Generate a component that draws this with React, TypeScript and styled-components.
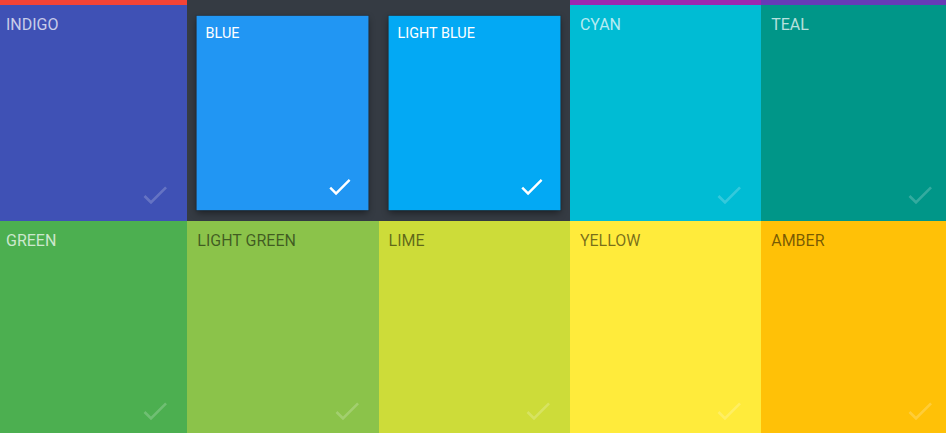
import React from "react";
import styled, { createGlobalStyle } from "styled-components";

const GlobalStyle = createGlobalStyle`
  html, body {
    margin: 0;
    padding: 0;
    width: 946px;
    height: 433px;
    overflow: hidden;
    background: #353b43;
    font-family: Roboto, "Liberation Sans", Arial, sans-serif;
  }
`;

const Viewport = styled.div`
  width: 946px;
  height: 433px;
  overflow: hidden;
`;

const Grid = styled.div`
  display: grid;
  grid-template-columns: repeat(5, 191.3px);
  grid-template-rows: 5px;
  grid-auto-rows: 216px;
  margin-left: -4px;
  width: max-content;
`;

const PeekCell = styled.div<{ $bg: string }>`
  background: ${(p) => p.$bg};
`;

const Cell = styled.div<{ $bg: string; $selected: boolean }>`
  background: ${(p) => (p.$selected ? "#353b43" : p.$bg)};
  display: flex;
`;

const Swatch = styled.div<{ $bg: string; $selected: boolean }>`
  flex: 1;
  display: flex;
  flex-direction: column;
  background: ${(p) => p.$bg};
  transform: ${(p) => (p.$selected ? "scale(0.9)" : "none")};
  box-shadow: ${(p) =>
    p.$selected
      ? "0 0 0 1px rgba(0,0,0,0.12), 0 3px 8px rgba(0,0,0,0.45)"
      : "none"};
`;

const Label = styled.div<{ $light: boolean; $selected: boolean }>`
  padding: 11px 10px 0;
  font-size: 16px;
  line-height: 18px;
  text-transform: uppercase;
  color: ${(p) =>
    p.$selected
      ? "#ffffff"
      : p.$light
      ? "rgba(0,0,0,0.54)"
      : "rgba(255,255,255,0.72)"};
`;

const Check = styled.svg<{ $selected: boolean }>`
  width: 32px;
  height: 32px;
  margin: auto 16px 10px auto;
  fill: ${(p) => (p.$selected ? "#ffffff" : "rgba(255,255,255,0.2)")};
`;

type Color = { name: string; hex: string; light?: boolean; selected?: boolean };

const peekRow = ["#f44336", "#353b43", "#353b43", "#9c27b0", "#673ab7"];

const colors: Color[] = [
  { name: "Indigo", hex: "#3f51b5" },
  { name: "Blue", hex: "#2196f3", selected: true },
  { name: "Light Blue", hex: "#03a9f4", selected: true },
  { name: "Cyan", hex: "#00bcd4" },
  { name: "Teal", hex: "#009688" },
  { name: "Green", hex: "#4caf50" },
  { name: "Light Green", hex: "#8bc34a", light: true },
  { name: "Lime", hex: "#cddc39", light: true },
  { name: "Yellow", hex: "#ffeb3b", light: true },
  { name: "Amber", hex: "#ffc107", light: true },
];

const DoneIcon = ({ selected }: { selected: boolean }) => (
  <Check $selected={selected} viewBox="0 0 24 24">
    <path d="M9 16.17L4.83 12l-1.42 1.41L9 19 21 7l-1.41-1.41z" />
  </Check>
);

export default function App() {
  return (
    <Viewport>
      <GlobalStyle />
      <Grid>
        {peekRow.map((bg, i) => (
          <PeekCell key={`peek-${i}`} $bg={bg} />
        ))}
        {colors.map((c) => (
          <Cell key={c.name} $bg={c.hex} $selected={!!c.selected}>
            <Swatch $bg={c.hex} $selected={!!c.selected}>
              <Label $light={!!c.light} $selected={!!c.selected}>
                {c.name}
              </Label>
              <DoneIcon selected={!!c.selected} />
            </Swatch>
          </Cell>
        ))}
      </Grid>
    </Viewport>
  );
}
